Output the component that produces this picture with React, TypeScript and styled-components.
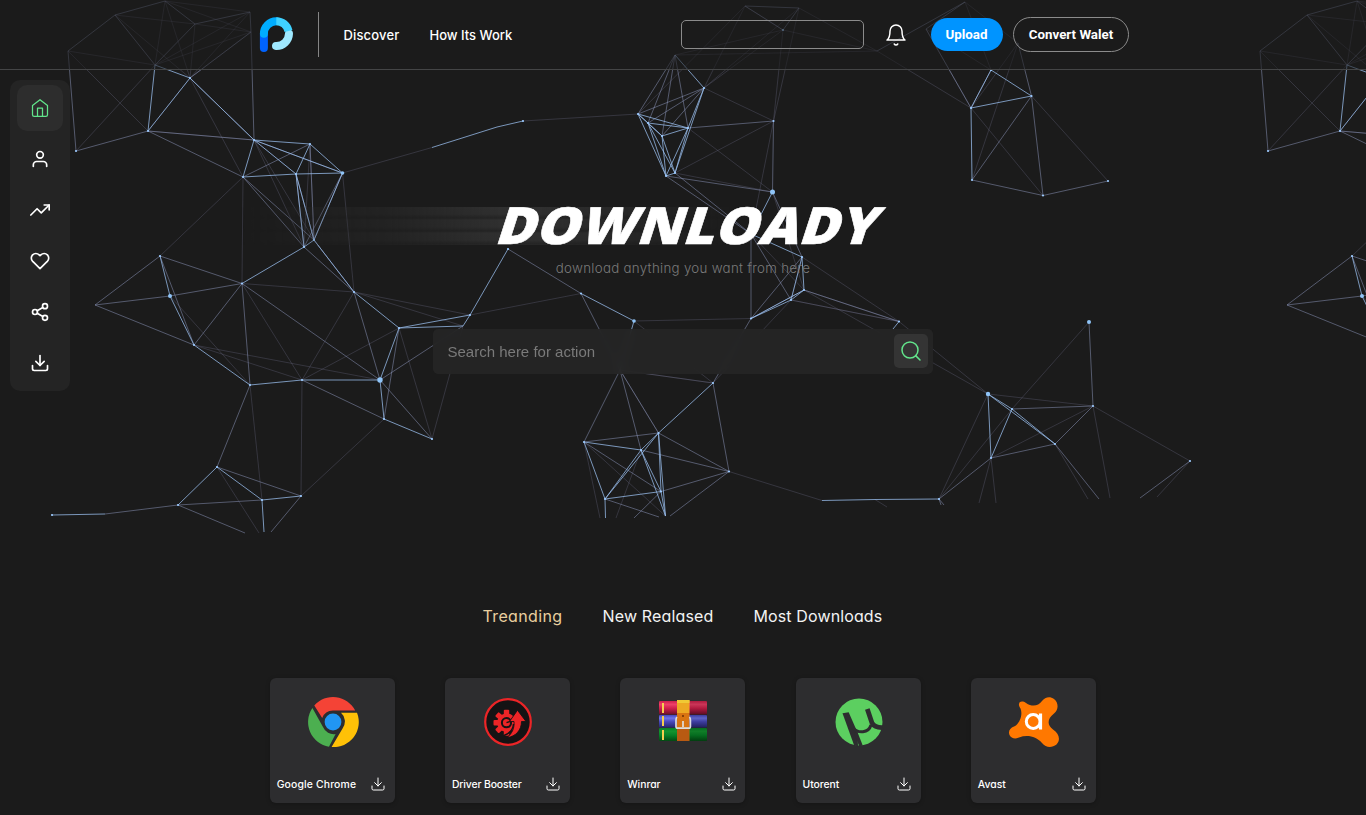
import React from "react";
import styled, { createGlobalStyle } from "styled-components";
import { FiBell, FiDownload, FiHeart, FiHome, FiSearch, FiShare2, FiTrendingUp, FiUser } from "react-icons/fi";

const GlobalStyle = createGlobalStyle`
  * { box-sizing: border-box; }
  body {
    margin: 0;
    background: #1b1b1b;
    color: #fff;
    font-family: Inter, "Open Sans", sans-serif;
    font-feature-settings: "cv11";
  }
`;

const Page = styled.div`
  position: relative;
  height: 815px;
  overflow: hidden;
`;

const MeshLayer = styled.svg`
  position: absolute;
  inset: 0;
  pointer-events: none;
`;

const Header = styled.header`
  position: relative;
  display: flex;
  align-items: center;
  height: 70px;
  padding: 0 237px 0 259px;
  border-bottom: 1px solid #444546;
  background: rgba(27, 27, 27, 0.58);
`;

const Divider = styled.div`
  width: 1px;
  height: 45px;
  margin-left: 24px;
  background: #858585;
`;

const Nav = styled.nav`
  display: flex;
  gap: 30px;
  margin-left: 24.5px;
`;

const NavLink = styled.a<{ $width: number; $spacing: number }>`
  width: ${(p) => p.$width}px;
  font-size: 13px;
  font-weight: 500;
  line-height: 20px;
  letter-spacing: ${(p) => p.$spacing}px;
  white-space: nowrap;
`;

const HeaderField = styled.input`
  width: 183px;
  height: 29px;
  margin-left: auto;
  border: 1px solid #8b8b8b;
  border-radius: 5px;
  background: transparent;
`;

const BellButton = styled.button`
  display: flex;
  margin: 0 23px 0 20px;
  padding: 0;
  border: 0;
  background: none;
  color: #fff;
`;

const PillButton = styled.button<{ $primary?: boolean }>`
  width: ${(p) => (p.$primary ? 72 : 116)}px;
  height: ${(p) => (p.$primary ? 33 : 35)}px;
  margin-right: ${(p) => (p.$primary ? 10 : 0)}px;
  padding: ${(p) => (p.$primary ? "0 1px 0 0" : "0")};
  border: ${(p) => (p.$primary ? "0" : "1px solid #8b8b8b")};
  border-radius: 18px;
  background: ${(p) => (p.$primary ? "#0094ff" : "transparent")};
  color: #fff;
  font: 700 13.33px Roboto, sans-serif;
  font-feature-settings: normal;
  white-space: nowrap;
`;

const Body = styled.div`
  position: relative;
  display: grid;
  grid-template-columns: 80px 1fr 80px;
  align-items: start;
`;

const Sidebar = styled.aside`
  display: flex;
  flex-direction: column;
  gap: 5px;
  width: 60px;
  height: 311px;
  margin: 10px 0 0 10px;
  padding: 5px 7px;
  border-radius: 10px;
  background: #242424;
`;

const SideItem = styled.button<{ $active?: boolean }>`
  display: flex;
  align-items: center;
  justify-content: center;
  width: 46px;
  height: 46px;
  padding: 0;
  border: 0;
  border-radius: 10px;
  background: ${(p) => (p.$active ? "#2d2d2d" : "transparent")};
  color: ${(p) => (p.$active ? "#62e58b" : "#fff")};
`;

const Content = styled.main`
  display: flex;
  flex-direction: column;
  align-items: center;
`;

const TitleRow = styled.div`
  position: relative;
  display: flex;
  justify-content: center;
  width: 826px;
  height: 38px;
  margin-top: 137px;
`;

const Trail = styled.div`
  position: absolute;
  left: -30px;
  top: 0;
  width: 500px;
  height: 38px;
  background: repeating-linear-gradient(to bottom, #303030 0, #2f2f2f 7px, #242424 11px, #303030 13px);
  mask-image: linear-gradient(to right, transparent, rgba(0, 0, 0, 0.4) 30%, #000 52%, #000 60%, transparent);
`;

const Title = styled.h1`
  position: relative;
  margin: 0;
  font: normal 800 51px/34px "Open Sans", sans-serif;
  letter-spacing: 0.4px;
  -webkit-text-stroke: 0.6px #fff;
  transform: translateX(7px) skewX(-18deg) scaleX(1.07);
  white-space: nowrap;
`;

const Subtitle = styled.p`
  margin: 13px 0 0;
  color: #7a7a7a;
  font-size: 13.3px;
  font-weight: 300;
  line-height: 20px;
  letter-spacing: 0.3px;
  white-space: nowrap;
`;

const SearchBar = styled.form`
  display: flex;
  align-items: center;
  width: 500px;
  height: 45px;
  margin-top: 51px;
  padding: 0 5px 1px 14.5px;
  border-radius: 5px;
  background: rgba(38, 38, 38, 0.88);
  backdrop-filter: blur(5px);
`;

const SearchInput = styled.input`
  flex: 1;
  padding: 1px 0 0;
  border: 0;
  background: transparent;
  font: 15px "Liberation Sans", sans-serif;
  &::placeholder { color: #7a7a7a; }
`;

const SearchButton = styled.button`
  display: flex;
  align-items: center;
  justify-content: center;
  width: 34px;
  height: 34px;
  padding: 0;
  border: 0;
  border-radius: 5px;
  background: #343434;
  color: #62e58b;
`;

const Tabs = styled.div`
  display: flex;
  gap: 40px;
  margin-top: 229.5px;
`;

const Tab = styled.button<{ $width: number; $spacing: number; $active?: boolean }>`
  width: ${(p) => p.$width}px;
  padding: 0;
  border: 0;
  background: none;
  color: ${(p) => (p.$active ? "#e9cf9f" : "#f3f3f3")};
  font: 400 16px/24px Inter, sans-serif;
  font-feature-settings: "cv11";
  letter-spacing: ${(p) => p.$spacing}px;
  text-align: left;
  white-space: nowrap;
`;

const Cards = styled.div`
  display: flex;
  justify-content: space-between;
  width: 826.2px;
  margin: 50.5px 0.5px 0 0;
`;

const Card = styled.article`
  display: flex;
  flex-direction: column;
  align-items: center;
  justify-content: space-between;
  width: 125px;
  height: 125px;
  padding: 18px 7px 8px 8px;
  border-radius: 6px;
  background: #2d2d2f;
  box-shadow: 0 1px 4px rgba(0, 0, 0, 0.25);
`;

const CardFooter = styled.div`
  display: flex;
  align-items: flex-end;
  align-self: flex-start;
  justify-content: space-between;
  width: 109.5px;
  margin-left: -1px;
  svg { margin-bottom: 3px; }
`;

const CardName = styled.span<{ $spacing: number }>`
  font-size: 10.4px;
  font-weight: 500;
  line-height: 20px;
  letter-spacing: ${(p) => p.$spacing}px;
  white-space: nowrap;
`;

type Point = [number, number];

const vertices: Record<string, Point> = {
  A: [68, 51], B: [115, 15], C: [165, 1], D: [195, 24], E: [250, 12], F: [251, 32], G: [155, 65], H: [190, 78],
  I: [148, 131], J: [76, 151], K: [254, 140], L: [310, 144], M: [342.5, 173], N: [296, 174], O: [243, 177],
  P: [304, 247], Q: [314, 240], R: [160, 256], S: [95, 305], T: [170, 296], U: [194, 345], V: [242, 283.5],
  W: [354, 292], X: [399, 328], Y: [470, 315], Z: [463, 326], a: [508, 249], b: [581, 293.5], c: [634, 321],
  d: [302, 380], e: [250, 385], f: [380, 380], g: [384, 419], h: [432, 439], i: [217, 467], j: [178, 505],
  k: [262, 500], l: [301, 496], m: [105, 514], n: [52, 515], z1: [245, 533], z2: [259, 533], z3: [264, 532], z4: [271, 532],
  o: [432, 147.5], p: [523, 121], p2: [497, 127], q: [638, 114], r: [675, 55], s: [704, 88], t: [648, 123], u: [662, 136],
  v: [688, 128], w: [666, 176], x: [675, 173], y: [773.5, 121], z: [772.5, 192],
  AA: [745, 6], AB: [799, 8], AC: [783, 30], AD: [877, 51], AE: [926, 29], AF: [965, 2], AG: [1018, 43],
  AH: [991, 70], AI: [1031.5, 96], AJ: [971, 108], AK: [972, 180], AL: [1043, 195.5], AM: [1108, 181],
  BA: [751, 318.5], BB: [791, 300], BC: [804, 290], BD: [802, 257], BE: [751, 234], BF: [899, 321.5], BF2: [893, 329],
  BG: [620, 370], BH: [713, 383], BI: [658.5, 433], BJ: [641, 450], BK: [584, 442], BL: [605, 499], BM: [661, 491.5],
  BN: [665.5, 516], BO: [729, 471.5], BP: [822, 500.5], BQ: [875, 499.5], BR: [939, 499],
  BS: [991, 458], BT: [988, 394], BU: [1012, 409], BV: [1093, 406], BW: [1055, 444], BX: [1089, 322], BY: [1190, 461],
  y1: [600, 518], y2: [605.5, 518], y3: [616, 518], y4: [634, 518], y5: [659, 517], y6: [670, 516],
  x1: [887, 507], x2: [941, 505], x3: [944, 505], x4: [979, 503], x5: [996, 503], x6: [1088, 499], x7: [1099, 499],
  x8: [1110, 498], x9: [1140, 498], xa: [1157, 497],
};

/* Vertex pairs of the network, from the faintest lines to the brightest. */
const faintEdges = `A-G A-I G-J B-D B-H C-E C-F C-G C-H D-F D-H E-G E-H F-G F-H I-H H-O K-N K-P K-Q L-P L-Q I-K M-W
 O-R O-V V-W V-d W-d W-Y W-Z U-d U-f T-e d-X X-h Y-b Z-h e-k g-l i-z2 o-M p-q d-l
 q-AA s-AC s-y y-AB AC-AD AB-AD x-y x-z v-z y-BE AA-AC AD-AJ r-AC AC-y r-AD s-AA s-AB AF-AH AE-AJ AE-AH AF-AG AG-AJ AG-AK AJ-AL AI-AM
 c-BA c-BH BG-BH BD-BF BC-BF BB-BF BE-BC BD-BB BB-BF BF-BT BC-BT BB-BH z-BC BI-BG BG-BH
 BK-BN BJ-y3 BK-y1 BO-BP BQ-x1 BT-BR BU-BR BX-BU BS-BV BT-BV BV-BY BV-x8 BS-x4 BS-x5 BW-x6 BY-xa`;
const softEdges = `A-B B-C C-D D-E E-F F-K A-J I-J I-O I-K H-K B-G D-G H-F K-M N-P L-O O-P O-Q L-Q N-Q M-P M-Q
 R-S S-T S-U R-V T-V R-U U-V V-e V-f Q-W P-W W-f X-g f-h f-Z d-g e-i i-l j-k j-z1 l-z4 j-m b-BG a-b
 r-q r-t r-u r-v q-s t-s u-s v-y w-z w-BE x-BE y-z AA-AB AB-AC AA-AC AD-AF AG-AI AI-AK AI-AL AK-AL AL-AM AE-AF AE-AJ AH-AJ
 BE-BB BE-BA BA-BD BC-BA z-BD BC-BF BA-BH BH-BO BG-BK BG-BJ BI-BK BI-BG BI-BO BJ-BO BM-BO BK-BM BM-y4 BL-y5 BO-y6
 BS-BR BS-BW BV-BX BV-BW BW-x7 BY-x9 BU-BV BR-x2 BR-x3`;
const brightEdges = `G-I H-I G-H H-K K-L L-M K-M K-N O-N N-M O-K L-N N-P N-Q M-Q P-Q P-V R-T T-U U-e e-d d-f W-Q W-X X-f f-g g-h X-Y X-Z Y-Z Y-a
 b-c c-BG i-j i-k k-l k-z3 m-n o-p2 p2-p q-t t-u q-u q-v t-v u-v q-w t-w t-x u-w u-x v-w v-x w-x s-x r-s s-v
 AH-AI AH-AJ AJ-AI AJ-AK z-BE BE-BD BD-BC BD-BB BB-BC BB-BA BC-BA BH-BI BI-BJ BK-BJ BK-BL BJ-BL BI-BL BJ-BM BJ-BN BI-BM BI-BN BL-BM BM-BN BL-y2
 BP-BQ BQ-BR BT-BS BT-BU BT-BW BU-BW BU-BS BF-BF2`;

const toPath = (edges: string) =>
  edges
    .trim()
    .split(/\s+/)
    .map((edge) => edge.split("-"))
    .filter(([from, to]) => vertices[from] && vertices[to])
    .map(([from, to]) => `M${vertices[from]}L${vertices[to]}`)
    .join("");

const nodes = "H K L M N O P Q R V W X Y a b d e g h i j k l I J n q s t u v w x y AC AI AJ AK AL AM AH BA BB BC BD BF BH BI BJ BK BL BM BO BR BS BU BV BW BY U p".split(" ");
const largeNodes: [string, number][] = [["f", 2.7], ["T", 2], ["M", 1.8], ["c", 1.8], ["z", 2.5], ["BT", 2.2], ["BX", 2]];

const Mesh = () => (
  <MeshLayer width="1366" height="540" viewBox="0 0 1366 540" fill="none">
    <defs>
      <clipPath id="upper-edge">
        <path d="M1192 0h174v340h-174z" />
      </clipPath>
      <g id="network">
        <path d={toPath(faintEdges)} stroke="#7a7a9c" strokeOpacity="0.33" strokeWidth="0.85" />
        <path d={toPath(softEdges)} stroke="#939dc4" strokeOpacity="0.54" strokeWidth="0.9" />
        <path d={toPath(brightEdges)} stroke="#98bdec" strokeOpacity="0.76" strokeWidth="1" />
        {nodes.map((id) => (
          <circle key={id} cx={vertices[id][0]} cy={vertices[id][1]} r="1.1" fill="#9ccbff" />
        ))}
        {largeNodes.map(([id, r]) => (
          <circle key={id} cx={vertices[id][0]} cy={vertices[id][1]} r={r} fill="#8fc4f7" />
        ))}
      </g>
    </defs>
    <use href="#network" />
    <g clipPath="url(#upper-edge)">
      <use href="#network" x="1192" />
    </g>
  </MeshLayer>
);

const BrandLogo = () => (
  <svg width="35" height="37" viewBox="259 16 35 37" fill="none" strokeWidth="8" strokeLinecap="round">
    <path d="M289 33.7A12.6 12.6 0 0 1 276 46" stroke="#9fe9ff" />
    <path d="M263.9 48V34" stroke="#0063ff" />
    <path d="M263.9 33.8A12.5 12.5 0 0 1 276.3 21.2" stroke="#00adff" />
    <path d="M276.3 21.2A12.6 12.6 0 0 1 288.5 31" stroke="#3fd2ff" strokeLinecap="butt" />
  </svg>
);

const ChromeLogo = () => (
  <svg width="52" height="52" viewBox="-26 -26 52 52">
    <path d="M-18.7-16.6A25 25 0 0 1 22.2-11.5H0A11.5 11.5 0 0 0-10.8-3.9z" fill="#f44336" />
    <path d="M24-9.2A25 25 0 0 1-1.4 25L9.7 6.2A11.5 11.5 0 0 0 8-9.2z" fill="#ffc107" />
    <path d="M-20.6-14A25 25 0 0 0-4 24.7L2.6 12A11.5 11.5 0 0 1-10 5z" fill="#4caf50" />
    <circle r="8.4" fill="#2196f3" />
  </svg>
);

const gearTeeth = [90, 138, 180, 222, 270].map((deg) => (
  <rect key={deg} x="7" y="-2.7" width="6" height="5.4" rx="1" transform={`rotate(${deg})`} />
));

const DriverBoosterLogo = () => (
  <svg width="52" height="52" viewBox="-26 -26 52 52">
    <circle r="22.8" fill="#151314" stroke="#ec2527" strokeWidth="2.2" />
    <g transform="translate(-1.5 .7)">
      <g fill="#ec2527">
        <circle r="9.3" />
        {gearTeeth}
      </g>
      <circle r="4.6" fill="none" stroke="#151314" strokeWidth="2" />
      <path d="M0 0L8-3" stroke="#151314" strokeWidth="1.4" />
    </g>
    <path d="M9.5-11.8L18-.5h-4.5C13.5 8 8 14.5-1 15.7 4.5 11 6.5 6 6-.5H1.5z" fill="#ec2527" stroke="#151314" strokeWidth="0.9" />
    <path d="M5.5 2C5 7.5 1.5 11.5-4 13.5" stroke="#151314" strokeWidth="1.5" fill="none" />
  </svg>
);

const WinrarLogo = () => (
  <svg width="52" height="52" viewBox="0 0 52 52">
    <defs>
      {[["red", "#ee4068", "#cf1f4b", "#6d0f2a"], ["blue", "#6f74ea", "#4747b9", "#27276d"], ["green", "#14942f", "#078126", "#034913"]].map(([id, top, mid, low]) => (
        <linearGradient key={id} id={id} x2="0" y2="1">
          <stop stopColor={mid} />
          <stop offset="0.25" stopColor={top} />
          <stop offset="0.55" stopColor={mid} />
          <stop offset="1" stopColor={low} />
        </linearGradient>
      ))}
    </defs>
    <rect x="2" y="5" width="48" height="13.5" rx="1" fill="url(#red)" />
    <rect x="2" y="19" width="48" height="12.5" rx="1" fill="url(#blue)" />
    <rect x="2" y="32" width="48" height="13" rx="1" fill="url(#green)" />
    <rect x="33" y="5" width="17" height="40" fill="#000" opacity="0.15" />
    <path d="M6 7v10M6 20v10M6 34v10" stroke="#f5cf50" strokeWidth="2" />
    <rect x="20" y="4" width="12.5" height="13" fill="#eda823" />
    <rect x="20" y="4" width="12.5" height="3" fill="#f0c935" />
    <rect x="20" y="17" width="12.5" height="15" fill="#d97412" />
    <rect x="20" y="32" width="12.5" height="13" fill="#b85a12" />
    <path d="M20 21q-1 1-1 3v6.5q0 1.7 1.7 1.7h11q1.7 0 1.7-1.7V24q0-2-1-3M26 25v6" stroke="#dedede" strokeWidth="1.7" fill="none" />
    <circle cx="26" cy="20" r="1" fill="#6e2f04" />
  </svg>
);

const UtorrentLogo = () => (
  <svg width="52" height="52" viewBox="-26 -26 52 52">
    <circle r="23.5" fill="#5ccf60" />
    <g fill="none" stroke="#2d2d2f">
      <path d="M-16.5-8.8L-10.3-9.8-1.5 10.5-1 24.5-5 23z" fill="#2d2d2f" stroke="none" />
      <path d="M-3.5 10L2 24" strokeWidth="3.5" />
      <path d="M-6 6C-1 11.5 9.5 11.5 12 3" strokeWidth="3" />
      <path d="M8.3-13L13 1q3 5 11 4.5" strokeWidth="4.8" />
    </g>
  </svg>
);

const AvastLogo = () => (
  <svg width="52" height="52" viewBox="0 0 52 52">
    <path d="M11 8C11.5 5 15 5 18 7C24 11 30 10.5 34 5C37 1 42 0 46 3C51 7 50.5 14 46 17.5C39 23 39 29 45 33.5C51 37.5 53 44 48.5 48.5C44 52 38 52 34 47C28 40 19 38.5 11 41.5C7 43.5 3 42 1.5 39C0 35 2 32 6 30.5C12 28 15 18 12.5 12.5C11.5 10.5 10.7 9.5 11 8Z" fill="#ff7800" />
    <circle cx="25.2" cy="25.5" r="6.9" fill="none" stroke="#fff" strokeWidth="3" />
    <path d="M32.5 17.5v16" stroke="#fff" strokeWidth="3.2" />
  </svg>
);

const apps = [
  { name: "Google Chrome", Logo: ChromeLogo, spacing: 0.15 },
  { name: "Driver Booster", Logo: DriverBoosterLogo, spacing: -0.13 },
  { name: "Winrar", Logo: WinrarLogo, spacing: -0.05 },
  { name: "Utorent", Logo: UtorrentLogo, spacing: -0.05 },
  { name: "Avast", Logo: AvastLogo, spacing: 0 },
];

const sideIcons = [FiHome, FiUser, FiTrendingUp, FiHeart, FiShare2, FiDownload];

export default function App() {
  return (
    <Page>
      <GlobalStyle />
      <Mesh />
      <Header>
        <BrandLogo />
        <Divider />
        <Nav>
          <NavLink $width={56} $spacing={0.15}>Discover</NavLink>
          <NavLink $width={84} $spacing={0}>How Its Work</NavLink>
        </Nav>
        <HeaderField />
        <BellButton><FiBell size={24} strokeWidth={1.5} /></BellButton>
        <PillButton $primary>Upload</PillButton>
        <PillButton>Convert Walet</PillButton>
      </Header>
      <Body>
        <Sidebar>
          {sideIcons.map((Icon, index) => (
            <SideItem key={index} $active={index === 0}>
              <Icon size={20} strokeWidth={index === 0 ? 1.5 : 2} />
            </SideItem>
          ))}
        </Sidebar>
        <Content>
          <TitleRow>
            <Trail />
            <Title>DOWNLOADY</Title>
          </TitleRow>
          <Subtitle>download anything you want from here</Subtitle>
          <SearchBar>
            <SearchInput placeholder="Search here for action" />
            <SearchButton type="button"><FiSearch size={24} strokeWidth={1.5} /></SearchButton>
          </SearchBar>
          <Tabs>
            <Tab $active $width={80} $spacing={0.35}>Treanding</Tab>
            <Tab $width={111} $spacing={0.15}>New Realased</Tab>
            <Tab $width={130} $spacing={0.12}>Most Downloads</Tab>
          </Tabs>
          <Cards>
            {apps.map(({ name, Logo, spacing }) => (
              <Card key={name}>
                <Logo />
                <CardFooter>
                  <CardName $spacing={spacing}>{name}</CardName>
                  <FiDownload size={16} strokeWidth={1.5} />
                </CardFooter>
              </Card>
            ))}
          </Cards>
        </Content>
      </Body>
    </Page>
  );
}
